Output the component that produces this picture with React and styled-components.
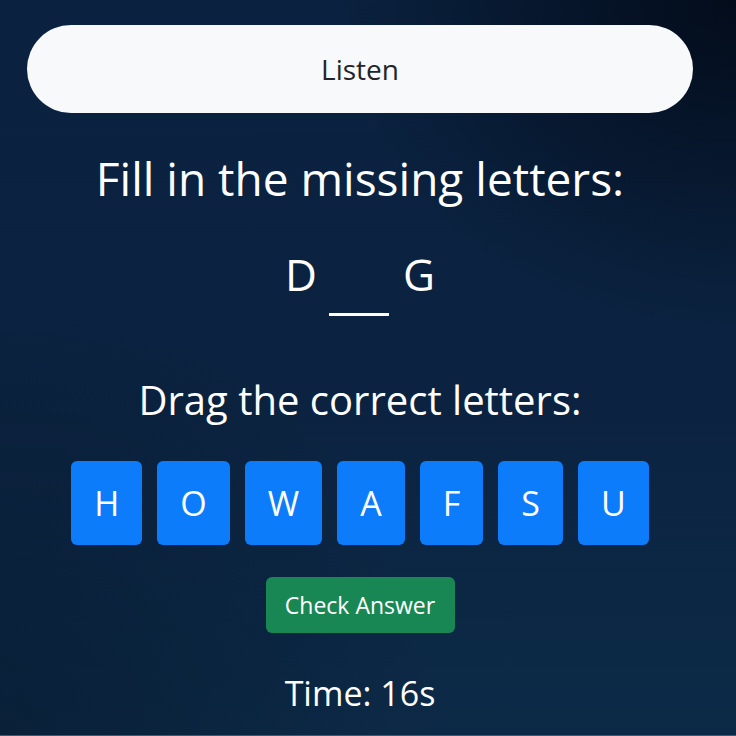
import React from "react";
import styled, { createGlobalStyle } from "styled-components";

const Global = createGlobalStyle`
  html, body { margin: 0; padding: 0; background: #3f5a6e; }
  body { font-family: "Open Sans", "Noto Sans", sans-serif; }
  * { box-sizing: border-box; }
`;

const Page = styled.div`
  width: 736px;
  height: 735px;
  overflow: hidden;
  background:
    radial-gradient(ellipse 55% 45% at 100% 0%, rgba(2, 8, 20, 0.85), rgba(2, 8, 20, 0) 100%),
    radial-gradient(ellipse 60% 60% at 0% 100%, rgba(4, 14, 30, 0.35), rgba(4, 14, 30, 0) 100%),
    linear-gradient(180deg, #0a2240 0%, #0b2340 55%, #0c2a47 100%);
`;

const Main = styled.div`
  width: 720px;
  padding: 25px 27px 0;
  display: flex;
  flex-direction: column;
  align-items: center;
  color: #ffffff;
`;

const ListenButton = styled.button`
  width: 100%;
  height: 88px;
  border: none;
  border-radius: 44px;
  background: #f8f9fa;
  color: #212529;
  font-family: inherit;
  font-size: 28px;
  cursor: pointer;
`;

const Title = styled.h2`
  margin: ${(p) => p.$mt}px 0 0;
  font-weight: 400;
  font-size: ${(p) => p.$size}px;
  line-height: 1;
  text-align: center;
  white-space: nowrap;
`;

const WordRow = styled.div`
  margin-top: 51px;
  display: flex;
  align-items: flex-start;
  justify-content: center;
  height: 64px;
  font-size: 44px;
  line-height: 1;
`;

const Letter = styled.span`
  display: block;
`;

const Blank = styled.span`
  display: block;
  width: 60px;
  height: 3px;
  margin: 61px 14px 0 12px;
  background: #ffffff;
`;

const TileRow = styled.div`
  margin-top: 41px;
  display: flex;
  gap: 15px;
  justify-content: center;
`;

const Tile = styled.div`
  height: 84px;
  padding: 0 23px;
  display: flex;
  align-items: center;
  justify-content: center;
  background: #0d7cfb;
  border-radius: 6px;
  font-size: 34px;
  color: #ffffff;
`;

const CheckButton = styled.button`
  margin-top: 32px;
  width: 189px;
  height: 56px;
  border: none;
  border-radius: 6px;
  background: #198754;
  color: #ffffff;
  font-family: inherit;
  font-size: 23px;
  cursor: pointer;
`;

const Timer = styled.div`
  margin-top: 43px;
  font-size: 34px;
  line-height: 1;
`;

const letters = ["H", "O", "W", "A", "F", "S", "U"];

export default function App() {
  return (
    <>
      <Global />
      <Page>
        <Main>
          <ListenButton>Listen</ListenButton>
          <Title $mt={42} $size={46}>Fill in the missing letters:</Title>
          <WordRow>
            <Letter>D</Letter>
            <Blank />
            <Letter>G</Letter>
          </WordRow>
          <Title $mt={64} $size={40}>Drag the correct letters:</Title>
          <TileRow>
            {letters.map((l) => (
              <Tile key={l}>{l}</Tile>
            ))}
          </TileRow>
          <CheckButton>Check Answer</CheckButton>
          <Timer>Time: 16s</Timer>
        </Main>
      </Page>
    </>
  );
}
